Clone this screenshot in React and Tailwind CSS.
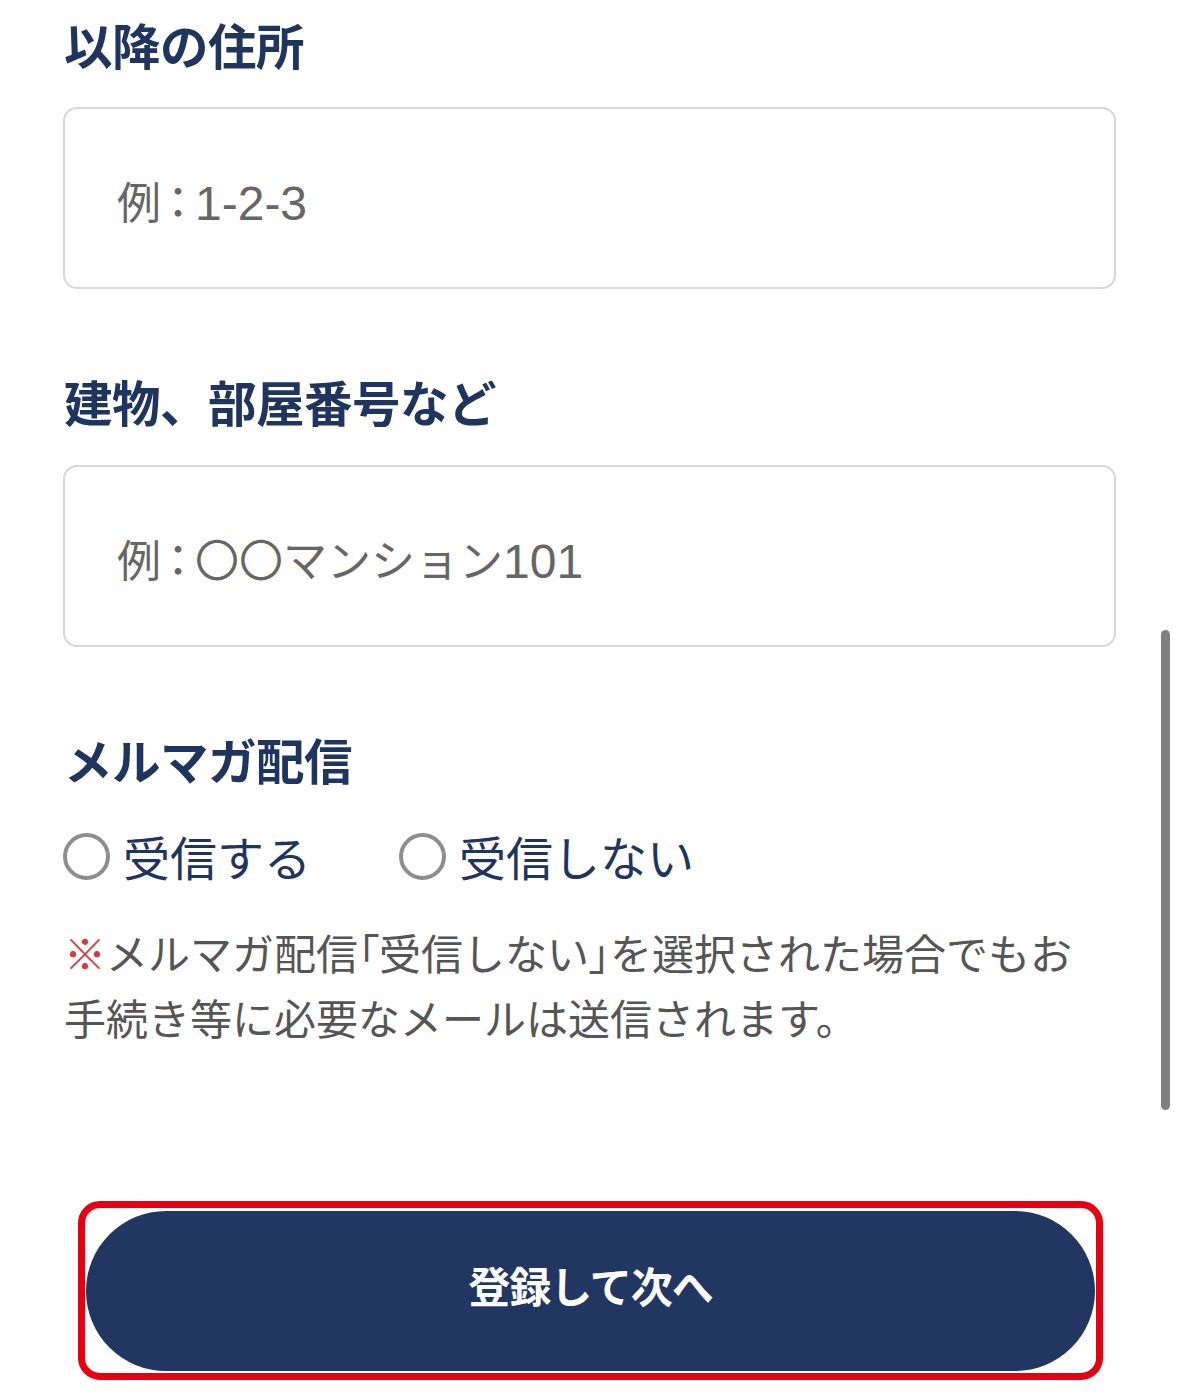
import React from "react";

const jp = "font-['Noto_Sans_CJK_JP','Noto_Sans',sans-serif]";

function FieldLabel({ children, className = "" }) {
  return (
    <h2 className={`text-[48.5px] leading-[56px] font-bold text-[#1f3560] tracking-[-0.5px] ${className}`}>
      {children}
    </h2>
  );
}

// 入力欄（プレースホルダー表示）
function TextField({ kana = "", digits }) {
  return (
    <div className="flex items-center w-full h-[182px] rounded-[14px] border-2 border-[#d6d8dd] bg-white pl-[52px] pt-[12px] text-[44px] leading-none text-[#666] font-['Liberation_Sans','Noto_Sans_CJK_JP',sans-serif] whitespace-nowrap">
      例<span className="inline-block w-[34px] text-center [font-feature-settings:'palt']">：</span>
      {kana}
      <span className="text-[48px]">{digits}</span>
    </div>
  );
}

function Radio({ label }) {
  return (
    <label className="flex items-center gap-[13px]">
      <span className="w-[47px] h-[47px] rounded-full border-[4px] border-[#8e8e8e] bg-white" />
      <span className="text-[47px] leading-[56px] text-[#1f3560]">{label}</span>
    </label>
  );
}

export default function App() {
  const palt = "[font-feature-settings:'palt']";
  return (
    <div className={`relative min-h-[1397px] bg-white overflow-hidden ${jp}`}>
      <div className="pl-[64px] pr-[63px] pt-[16px]">
        <FieldLabel>以降の住所</FieldLabel>
        <div className="mt-[35px] -ml-px">
          <TextField digits="1-2-3" />
        </div>

        <FieldLabel className="mt-[84px]">建物、部屋番号など</FieldLabel>
        <div className="mt-[36px] -ml-px">
          <TextField kana="〇〇マンション" digits="101" />
        </div>

        <FieldLabel className="mt-[84px]">メルマガ配信</FieldLabel>
        <div className="mt-[41px] flex items-center gap-[88px] -ml-px">
          <Radio label="受信する" />
          <Radio label="受信しない" />
        </div>

        <p className="mt-[35px] text-[42px] leading-[65px] text-[#555] whitespace-nowrap">
          <span className="text-[#d23a44]">※</span>メルマガ配信<span className={palt}>「</span>受信しない<span className={palt}>」</span>を選択された場合でもお
          <br />
          手続き等に必要なメールは送信されます。
        </p>
      </div>

      <div className="mt-[152px] ml-[78px] w-[1025px] h-[179px] rounded-[22px] border-[7px] border-[#e50012] overflow-hidden px-px pt-[3px] pb-[2px]">
        <button className="w-full h-full rounded-[80px] bg-[#213761] text-white text-[42px] font-bold tracking-[-1px] pb-[14px]">
          登録して次へ
        </button>
      </div>

      {/* scrollbar */}
      <div className="absolute left-[1161px] top-[630px] w-[9px] h-[480px] rounded-full bg-[#808080]" />
    </div>
  );
}
